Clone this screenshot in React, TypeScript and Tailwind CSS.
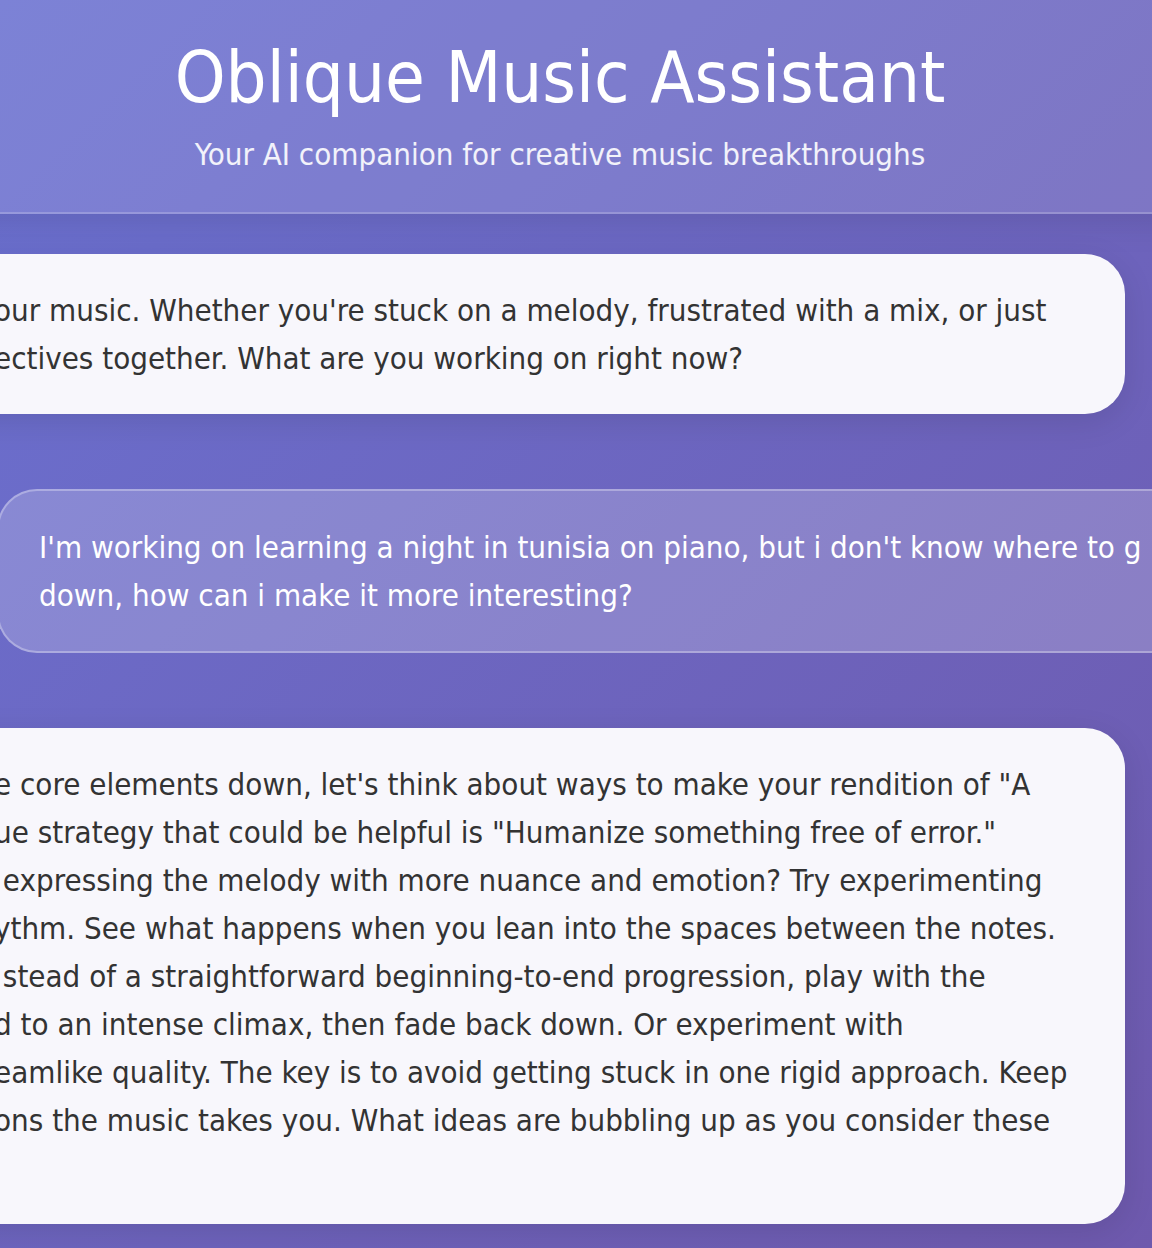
const bodyText = 'text-[31px] leading-[48px]';

const greeting = [
  "our music. Whether you're stuck on a melody, frustrated with a mix, or just",
  'ectives together. What are you working on right now?',
];

const question = [
  "I'm working on learning a night in tunisia on piano, but i don't know where to g",
  'down, how can i make it more interesting?',
];

const answer = [
  'e core elements down, let\'s think about ways to make your rendition of "A',
  'ue strategy that could be helpful is "Humanize something free of error."',
  ' expressing the melody with more nuance and emotion? Try experimenting',
  'ythm. See what happens when you lean into the spaces between the notes.',
  ' stead of a straightforward beginning-to-end progression, play with the',
  'd to an intense climax, then fade back down. Or experiment with',
  'eamlike quality. The key is to avoid getting stuck in one rigid approach. Keep',
  'ons the music takes you. What ideas are bubbling up as you consider these',
  ' ',
];

function Lines({ lines }: { lines: string[] }) {
  return (
    <p className={`whitespace-pre ${bodyText}`}>
      {lines.map((line) => (
        <span key={line} className="block">
          {line}
        </span>
      ))}
    </p>
  );
}

function AssistantMessage({ lines }: { lines: string[] }) {
  return (
    <article className="-ml-10 mr-[27px] rounded-r-[40px] bg-[#f8f7fc] py-8 pl-[34px] text-[#333] shadow-[0_8px_32px_rgba(0,0,0,0.1)]">
      <Lines lines={lines} />
    </article>
  );
}

function UserMessage({ lines }: { lines: string[] }) {
  return (
    <article className="-ml-[3px] rounded-l-[40px] border-y-2 border-l-2 border-white/30 bg-white/20 py-8 pl-10 text-white">
      <Lines lines={lines} />
    </article>
  );
}

export default function App() {
  return (
    <div className="min-h-screen overflow-hidden bg-linear-135 from-[#6a71d1] to-[#6e59ad] font-['DejaVu_Sans_Condensed','Noto_Sans',sans-serif]">
      <header className="-mx-10 border-b-2 border-white/20 bg-white/12 pt-8 pr-18 pb-8 pl-10 text-center text-white shadow-[0_8px_32px_rgba(0,0,0,0.1)]">
        <h1 className="pb-2 text-[72px] leading-[90px]">Oblique Music Assistant</h1>
        <p className={`pb-0.5 text-white/90 ${bodyText}`}>Your AI companion for creative music breakthroughs</p>
      </header>
      <main className="flex flex-col gap-[75px] pt-10 pb-6">
        <AssistantMessage lines={greeting} />
        <UserMessage lines={question} />
        <AssistantMessage lines={answer} />
      </main>
    </div>
  );
}
